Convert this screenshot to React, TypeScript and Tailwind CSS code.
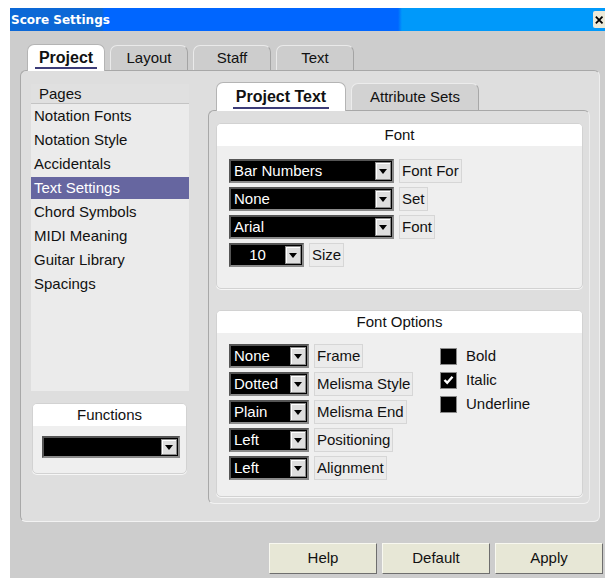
import React from 'react'

const ui = { fontFamily: '"Liberation Sans", Arial, sans-serif' }

const pages = [
  'Notation Fonts',
  'Notation Style',
  'Accidentals',
  'Text Settings',
  'Chord Symbols',
  'MIDI Meaning',
  'Guitar Library',
  'Spacings',
]

const ArrowButton = () => (
  <div className="flex w-[16px] items-center justify-center border border-[#8c8c8c] bg-[#dedede] shadow-[inset_1px_1px_0_#ffffff]">
    <svg width="8" height="5" viewBox="0 0 8 5">
      <path d="M0 0h8L4 5z" fill="#000" />
    </svg>
  </div>
)

type DropdownProps = { value?: string; width: string; center?: boolean; height?: string }

const Dropdown = ({ value, width, center, height = 'h-[24px]' }: DropdownProps) => (
  <div
    className={`flex ${height} ${width} shrink-0 items-stretch border-2 border-[#555] border-r-[#8a8a8a] border-b-[#8a8a8a] bg-black`}
  >
    <span
      className={`flex-1 text-[15px] leading-[20px] text-white ${center ? 'text-center' : 'pl-[3px]'}`}
    >
      {value}
    </span>
    <div className="flex p-px">
      <ArrowButton />
    </div>
  </div>
)

const Label = ({ children }: { children: React.ReactNode }) => (
  <span className="h-[24px] border border-[#d6d6d6] bg-[#ebebeb] px-[2px] text-[15px] leading-[22px] whitespace-nowrap text-[#111]">
    {children}
  </span>
)

const Group = ({
  title,
  className,
  children,
}: {
  title: string
  className: string
  children: React.ReactNode
}) => (
  <div
    className={`overflow-hidden rounded-[5px] border border-[#d2d2d2] bg-[#efefef] shadow-[0_1px_0_#f6f6f6] ${className}`}
  >
    <div className="h-[22px] bg-white text-center text-[15px] leading-[22px] text-[#111]">{title}</div>
    {children}
  </div>
)

const Check = ({ label, checked }: { label: string; checked?: boolean }) => (
  <div className="flex h-[24px] items-center gap-[9px]">
    <div className="flex h-[17px] w-[17px] items-center justify-center border border-[#8a8a8a] bg-black">
      {checked && (
        <svg width="11" height="10" viewBox="0 0 11 10">
          <path d="M1.5 5 L4.2 7.8 L9.5 1.8" stroke="#fff" strokeWidth="2.4" fill="none" />
        </svg>
      )}
    </div>
    <span className="text-[15px] text-[#111]">{label}</span>
  </div>
)

const Row = ({ children }: { children: React.ReactNode }) => (
  <div className="flex items-center gap-[5px]">{children}</div>
)

const MainTab = ({ label, active }: { label: string; active?: boolean }) =>
  active ? (
    <div className="relative z-10 flex h-[27px] w-[78px] items-center justify-center rounded-t-[7px] border border-b-0 border-[#b4b4b4] bg-white">
      <span className="border-b-2 border-[#3c3c78] px-[4px] text-[16px] leading-[19px] font-bold text-[#111]">
        {label}
      </span>
    </div>
  ) : (
    <div className="flex h-[26px] w-[78px] items-center justify-center rounded-t-[7px] border border-b-0 border-[#eaeaea] border-r-[#a4a4a4] bg-[#cdcdcd] text-[15px] text-[#111]">
      {label}
    </div>
  )

export default function App() {
  return (
    <div className="h-[578px] w-[605px] overflow-hidden bg-white pt-[8px] pl-[10px]" style={ui}>
      <div className="flex h-[570px] flex-col bg-[#cdcdcd]">
        {/* title bar */}
        <div className="flex h-[23px] shrink-0 items-center justify-between bg-[linear-gradient(90deg,#0c68d6_0px,#0c68d6_92px,#0066ff_94px,#0066ff_388px,#0099fa_392px)]">
          <span
            className="pl-[1px] text-[12px] font-bold text-white"
            style={{ fontFamily: '"DejaVu Sans", Verdana, sans-serif' }}
          >
            Score Settings
          </span>
          <div className="flex h-[17px] w-[12px] items-center justify-center overflow-hidden rounded-l-[2px] bg-[#ece9d8] pl-[2px]">
            <svg width="12" height="10" viewBox="0 0 12 10">
              <path d="M1 1 L9 9 M9 1 L1 9" stroke="#000" strokeWidth="2.2" />
            </svg>
          </div>
        </div>

        {/* main tabs */}
        <div className="mt-[13px] flex items-end gap-[5px] pl-[17px]">
          <MainTab label="Project" active />
          <MainTab label="Layout" />
          <MainTab label="Staff" />
          <MainTab label="Text" />
        </div>

        {/* project panel */}
        <div className="-mt-px ml-[10px] flex h-[452px] w-[580px] gap-[19px] rounded-[6px] border border-[#a8a8a8] border-r-[#eeeeee] border-b-[#f2f2f2] bg-[#dedede] pt-[13px] pl-[10px]">
          <div className="flex w-[158px] flex-col">
            <div className="flex h-[307px] flex-col bg-[#ebebeb]">
              <div className="h-[20px] border-b border-[#c4c4c4] bg-[#e0e0e0] pl-[8px] text-[15px] leading-[19px] text-[#111]">
                Pages
              </div>
              {pages.map((p) =>
                p === 'Text Settings' ? (
                  <div key={p} className="my-px h-[22px] bg-[#6666a0] pl-[3px] text-[15px] leading-[22px] text-white">
                    {p}
                  </div>
                ) : (
                  <div key={p} className="h-[24px] pl-[3px] text-[15px] leading-[24px] text-[#111]">
                    {p}
                  </div>
                ),
              )}
            </div>

            <Group title="Functions" className="mt-[12px] ml-[1px] h-[71px] w-[155px]">
              <div className="pt-[10px] pl-[9px]">
                <Dropdown width="w-[138px]" height="h-[22px]" />
              </div>
            </Group>
          </div>

          <div className="-mt-[2px] flex flex-col">
            {/* sub tabs */}
            <div className="flex items-end gap-[5px] pl-[8px]">
              <div className="relative z-10 flex h-[29px] w-[130px] items-center justify-center rounded-t-[7px] border border-b-0 border-[#b4b4b4] bg-white">
                <span className="border-b-2 border-[#3c3c78] px-[3px] text-[16px] leading-[21px] font-bold text-[#111]">
                  Project Text
                </span>
              </div>
              <div className="flex h-[28px] w-[128px] items-center justify-center rounded-t-[7px] border border-b-0 border-[#ececec] border-r-[#a8a8a8] bg-[#d2d2d2] text-[15px] text-[#111]">
                Attribute Sets
              </div>
            </div>

            <div className="-mt-px flex h-[394px] w-[382px] flex-col gap-[21px] rounded-[6px] border border-[#a8a8a8] border-r-[#eeeeee] border-b-[#f2f2f2] bg-[#dedede] pt-[12px] pl-[7px]">
              <Group title="Font" className="h-[166px] w-[367px]">
                <div className="flex flex-col gap-[4px] pt-[13px] pl-[12px]">
                  <Row>
                    <Dropdown value="Bar Numbers" width="w-[165px]" />
                    <Label>Font For</Label>
                  </Row>
                  <Row>
                    <Dropdown value="None" width="w-[165px]" />
                    <Label>Set</Label>
                  </Row>
                  <Row>
                    <Dropdown value="Arial" width="w-[165px]" />
                    <Label>Font</Label>
                  </Row>
                  <Row>
                    <Dropdown value="10" width="w-[75px]" center />
                    <Label>Size</Label>
                  </Row>
                </div>
              </Group>

              <Group title="Font Options" className="h-[187px] w-[367px]">
                <div className="flex pt-[11px] pl-[12px]">
                  <div className="flex w-[211px] flex-col gap-[4px]">
                    <Row>
                      <Dropdown value="None" width="w-[80px]" />
                      <Label>Frame</Label>
                    </Row>
                    <Row>
                      <Dropdown value="Dotted" width="w-[80px]" />
                      <Label>Melisma Style</Label>
                    </Row>
                    <Row>
                      <Dropdown value="Plain" width="w-[80px]" />
                      <Label>Melisma End</Label>
                    </Row>
                    <Row>
                      <Dropdown value="Left" width="w-[80px]" />
                      <Label>Positioning</Label>
                    </Row>
                    <Row>
                      <Dropdown value="Left" width="w-[80px]" />
                      <Label>Alignment</Label>
                    </Row>
                  </div>
                  <div className="flex flex-col">
                    <Check label="Bold" />
                    <Check label="Italic" checked />
                    <Check label="Underline" />
                  </div>
                </div>
              </Group>
            </div>
          </div>
        </div>

        {/* dialog buttons */}
        <div className="mt-[21px] flex justify-end gap-[5px] pr-[2px]">
          {['Help', 'Default', 'Apply'].map((b) => (
            <button
              key={b}
              className="h-[31px] w-[108px] border border-[#f8f8f0] border-r-[#6e6e6e] border-b-[#6e6e6e] bg-[#e7e7d6] text-[15px] text-[#111]"
            >
              {b}
            </button>
          ))}
        </div>
      </div>
    </div>
  )
}
